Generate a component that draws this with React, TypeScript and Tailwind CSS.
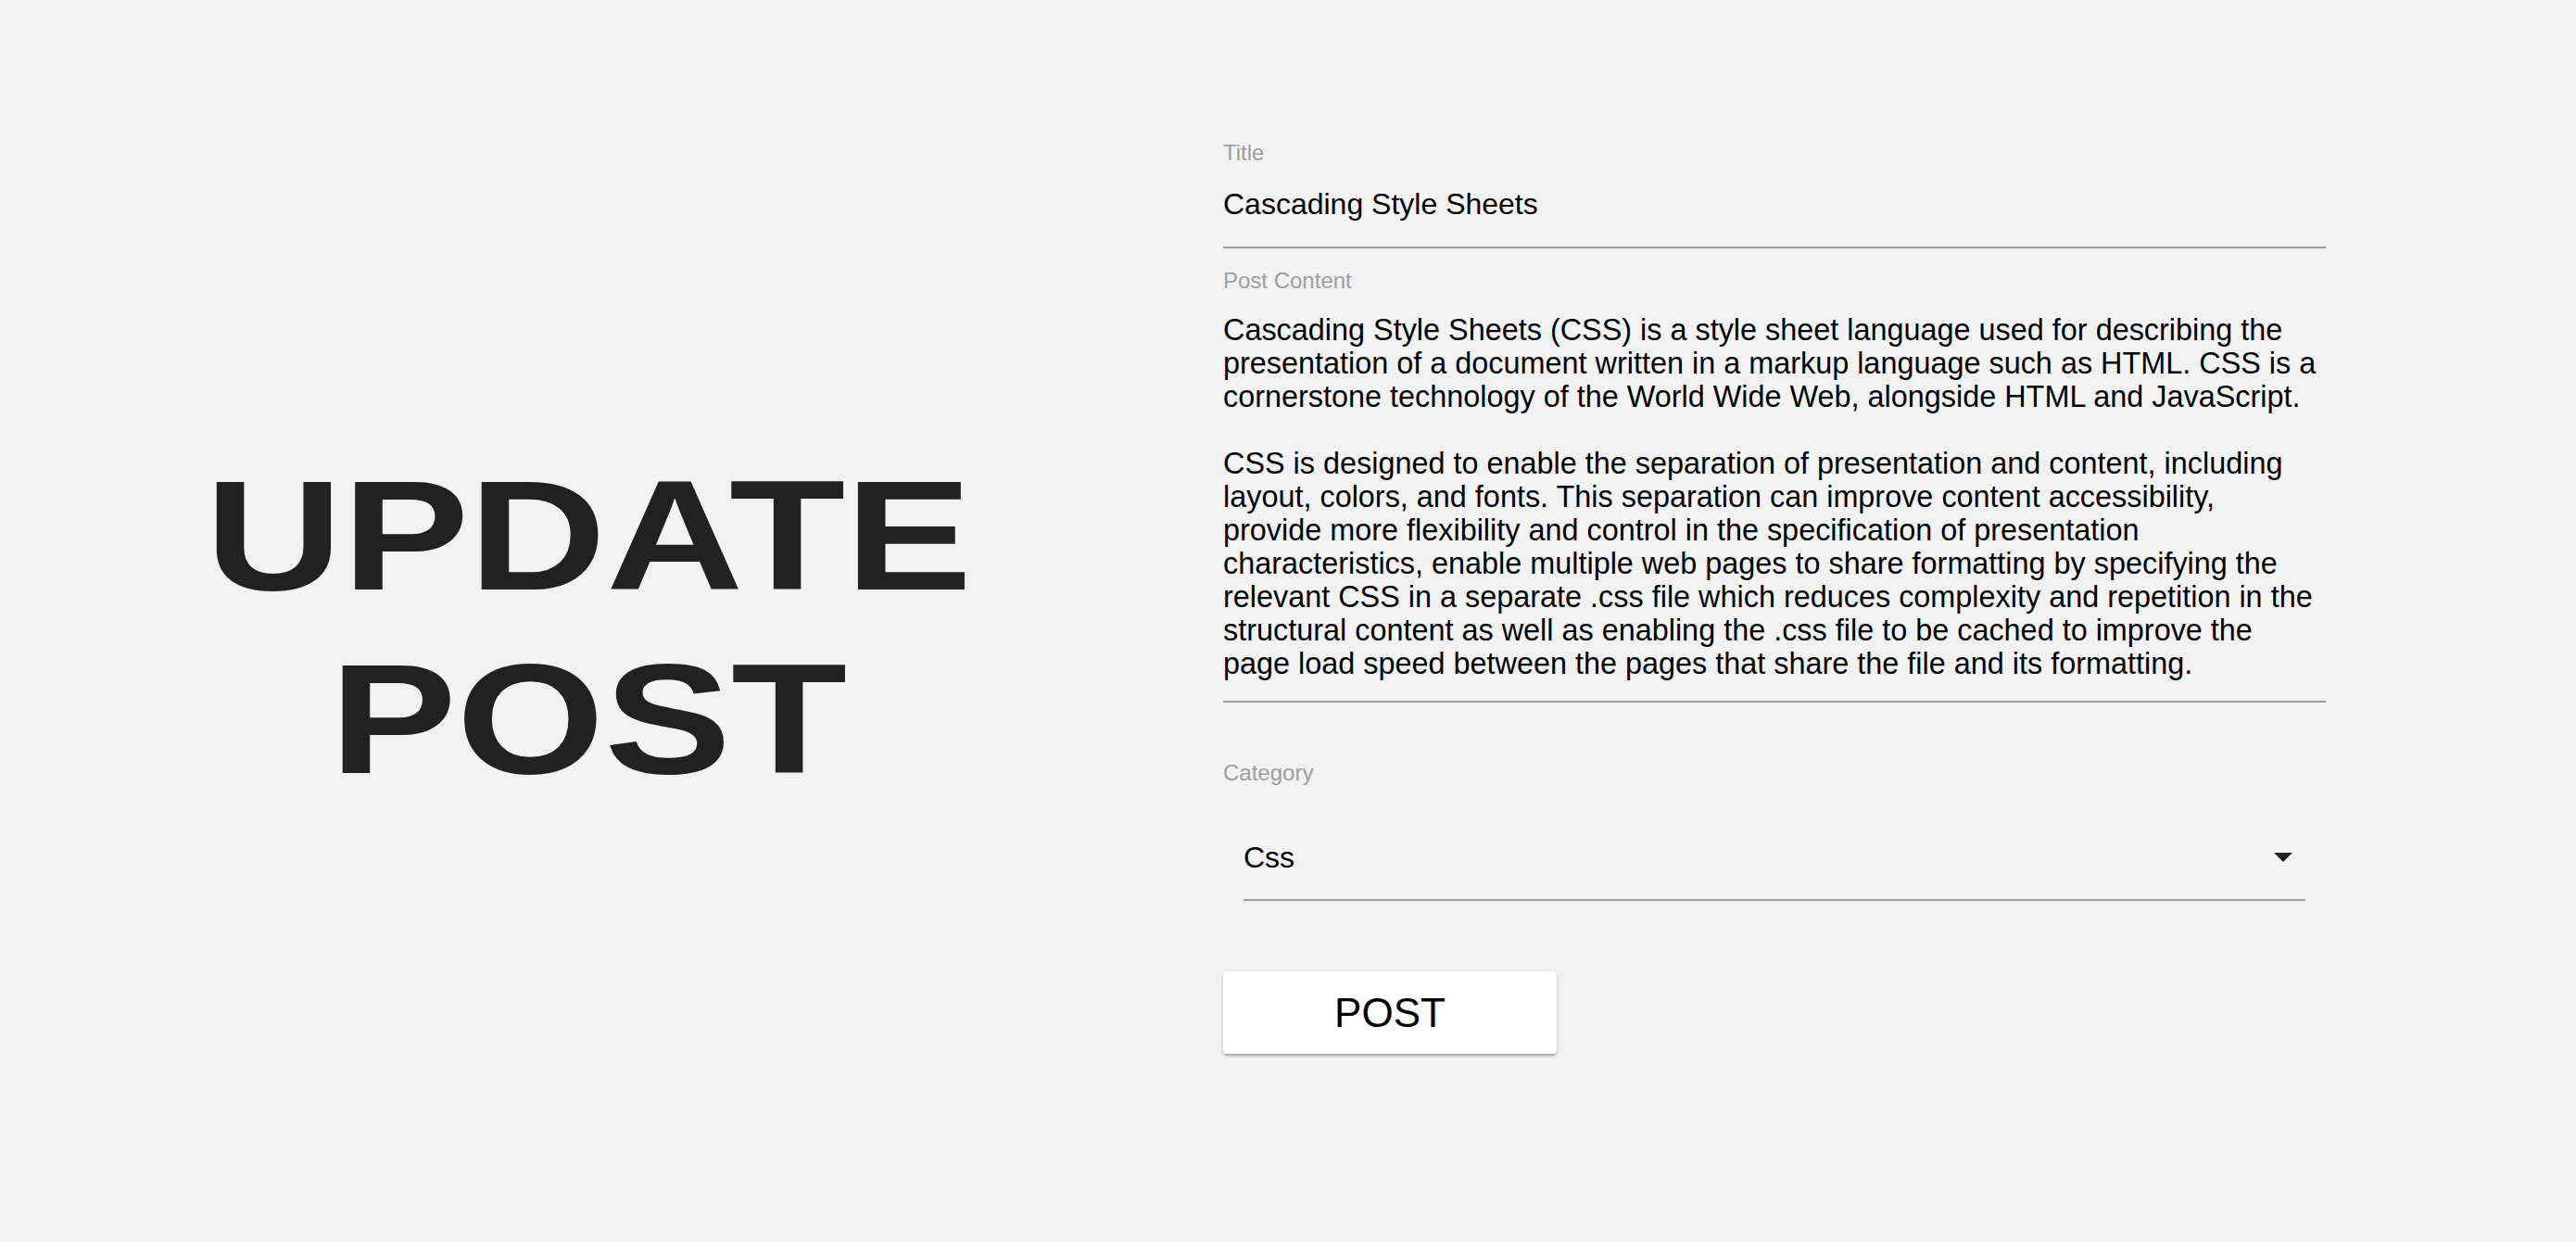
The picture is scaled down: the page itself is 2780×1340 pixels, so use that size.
import React from 'react';

const lines1 = [
  'Cascading Style Sheets (CSS) is a style sheet language used for describing the',
  'presentation of a document written in a markup language such as HTML. CSS is a',
  'cornerstone technology of the World Wide Web, alongside HTML and JavaScript.',
];

const lines2 = [
  'CSS is designed to enable the separation of presentation and content, including',
  'layout, colors, and fonts. This separation can improve content accessibility,',
  'provide more flexibility and control in the specification of presentation',
  'characteristics, enable multiple web pages to share formatting by specifying the',
  'relevant CSS in a separate .css file which reduces complexity and repetition in the',
  'structural content as well as enabling the .css file to be cached to improve the',
  'page load speed between the pages that share the file and its formatting.',
];

function Label({ children }: { children: React.ReactNode }) {
  return <div className="text-[24px] leading-[24px] text-[#9e9e9e]">{children}</div>;
}

export default function App() {
  return (
    <div className="flex h-[1340px] w-[2780px] bg-[#f2f2f2] font-['Liberation_Sans',Arial,sans-serif] text-black">
      <div className="flex w-[1270px] items-center justify-center">
        <h1 className="mt-[14px] scale-x-[1.22] text-center text-[168px] leading-[198px] font-bold text-[#212121]">
          UPDATE
          <br />
          POST
        </h1>
      </div>

      <div className="ml-[50px] flex w-[1190px] flex-col pt-[153px]">
        <Label>Title</Label>
        <div className="mt-[25px] border-b-2 border-[#9e9e9e] pb-[28px] text-[32px] leading-[36px]">
          Cascading Style Sheets
        </div>

        <div className="mt-[23px]">
          <Label>Post Content</Label>
        </div>
        <div className="mt-[23px] border-b-2 border-[#9e9e9e] pb-[22px] text-[32.4px] leading-[36px] whitespace-nowrap">
          {lines1.map((l) => (
            <div key={l}>{l}</div>
          ))}
          <div className="h-[36px]" />
          {lines2.map((l) => (
            <div key={l}>{l}</div>
          ))}
        </div>

        <div className="mt-[64px]">
          <Label>Category</Label>
        </div>
        <div className="mx-[22px] mt-[61px] flex items-center justify-between border-b-2 border-[#9e9e9e] pb-[27px] text-[32px] leading-[36px]">
          <span>Css</span>
          <svg width="20" height="10" viewBox="0 0 20 10" className="mr-[14px]">
            <path d="M0 0h20L10 10z" fill="#212121" />
          </svg>
        </div>

        <button className="mt-[76px] flex h-[89px] w-[360px] items-center justify-center rounded-[4px] bg-white text-[44px] shadow-[0_3px_3px_-1px_rgba(0,0,0,0.3),0_1px_5px_0_rgba(0,0,0,0.12)]">
          POST
        </button>
      </div>
    </div>
  );
}
